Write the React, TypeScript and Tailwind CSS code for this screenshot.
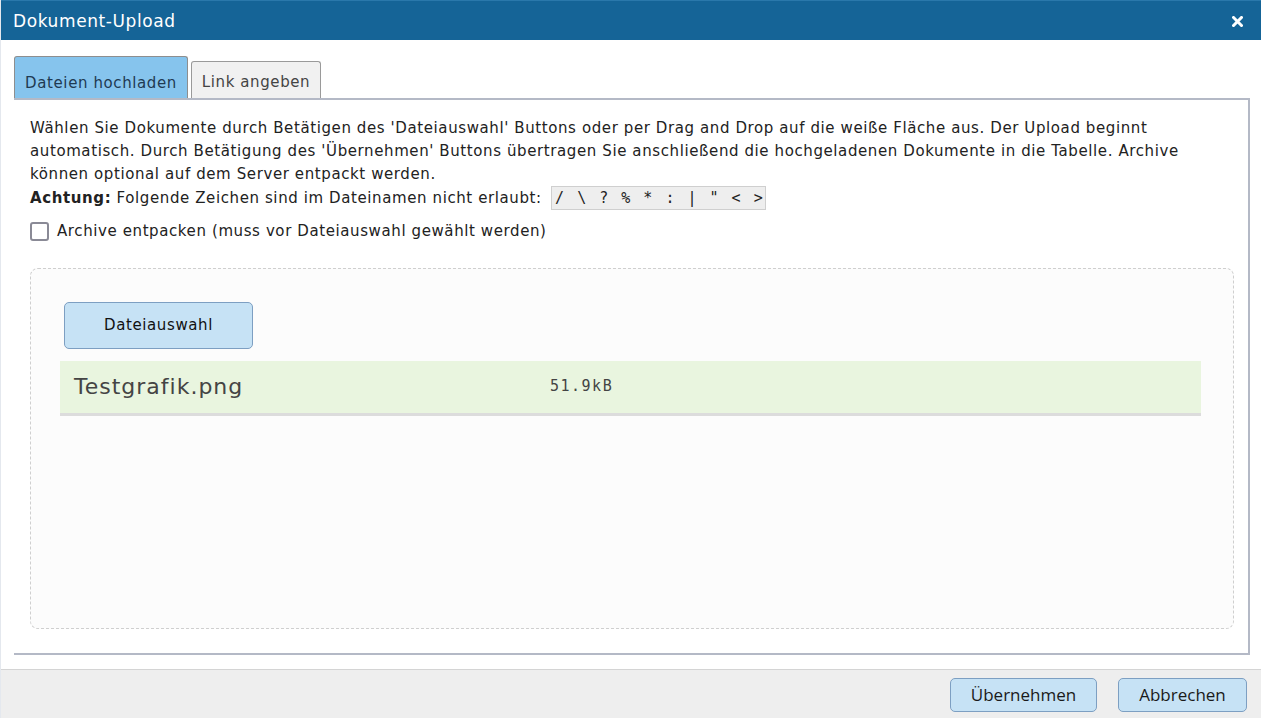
import { useState } from "react";

const verdana = { fontFamily: '"DejaVu Sans", Verdana, sans-serif' };
const mono = { fontFamily: '"DejaVu Sans Mono", monospace' };

function CloseIcon() {
  return (
    <svg width="11" height="11" viewBox="0 0 11 11" className="block">
      <path d="M1.5 1.5 L9.5 9.5 M9.5 1.5 L1.5 9.5" stroke="#fff" strokeWidth="3" strokeLinecap="square" />
    </svg>
  );
}

function ActionButton({ label }: { label: string }) {
  return (
    <button
      className="w-full h-[34px] rounded-[5px] border border-[#7d9fc2] bg-[#c6e2f5] text-[17px] tracking-normal text-[#1a1a1a]"
      style={{ fontFamily: '"Open Sans", "Noto Sans", sans-serif' }}
    >
      {label}
    </button>
  );
}

export default function App() {
  const [unpack, setUnpack] = useState(false);

  return (
    <div
      className="w-[1261px] h-[718px] flex flex-col bg-white border-l border-[#e4e8ee] overflow-hidden tracking-[0.6px]"
      style={verdana}
    >
      {/* title bar */}
      <div className="h-[40px] shrink-0 bg-[#156497] flex items-center justify-between pl-[12px] pr-[18px] pt-[2px] border-t border-[#2a78ab]">
        <span className="text-[17px] text-white">Dokument-Upload</span>
        <CloseIcon />
      </div>

      {/* body */}
      <div className="flex-1 pt-[16px] pl-[13px] pr-[11px] pb-[14px] flex flex-col">
        {/* tabs */}
        <div className="flex items-end gap-[3px] h-[42px]">
          <div className="w-[174px] h-[42px] flex items-center justify-center pt-[11px] rounded-t-[3px] border border-b-0 border-[#8e8e8e] bg-[#86c4ed] text-[15px] text-[#1f3a52]">
            Dateien hochladen
          </div>
          <div className="w-[130px] h-[37px] flex items-center justify-center pt-[5px] rounded-t-[3px] border border-b-0 border-[#9a9a9a] bg-[#f1f1f1] text-[15px] text-[#444]">
            Link angeben
          </div>
        </div>

        {/* panel */}
        <div className="flex-1 border-t-2 border-r-2 border-b-2 border-[#b4b9c6] pl-[16px] pr-[6px] pt-[17px] pb-[24px] flex flex-col">
          <p className="text-[15px] leading-[23px] text-[#222] whitespace-nowrap">
            Wählen Sie Dokumente durch Betätigen des 'Dateiauswahl' Buttons oder per Drag and Drop auf die weiße Fläche aus. Der Upload beginnt
            <br />
            automatisch. Durch Betätigung des 'Übernehmen' Buttons übertragen Sie anschließend die hochgeladenen Dokumente in die Tabelle. Archive
            <br />
            können optional auf dem Server entpackt werden.
            <br />
            <span className="font-bold">Achtung:</span> Folgende Zeichen sind im Dateinamen nicht erlaubt:{" "}
            <code
              className="inline-block align-middle ml-[4px] border border-[#cfcfcf] bg-[#eeeeee] pl-[3px] pr-0 h-[24px] leading-[22px] text-[15px] tracking-[2px] text-[#222]"
              style={mono}
            >
              / \ ? % * : | " &lt; &gt;
            </code>
          </p>

          <label className="mt-[10px] flex items-center gap-[8px] text-[15px] text-[#222] cursor-pointer">
            <span
              onClick={() => setUnpack(!unpack)}
              className="w-[19px] h-[19px] rounded-[3px] border-2 border-[#8a8a96] bg-white flex items-center justify-center text-[12px]"
            >
              {unpack ? "✓" : ""}
            </span>
            Archive entpacken (muss vor Dateiauswahl gewählt werden)
          </label>

          {/* drop zone */}
          <div className="flex-1 mt-[25px] mr-[8px] rounded-[8px] border border-dashed border-[#cfcfcf] bg-[#fcfcfc] pt-[33px] pl-[29px] pr-[32px]">
            <button className="ml-[4px] w-[189px] h-[47px] rounded-[5px] border border-[#7d9fc2] bg-[#c6e2f5] text-[15px] text-[#111]">
              Dateiauswahl
            </button>
            <div className="mt-[12px] h-[55px] bg-[#e9f5df] border-b-[3px] border-[#dcdcdc] flex items-center">
              <span className="w-[490px] pl-[14px] text-[22px] tracking-[1px] text-[#444]">Testgrafik.png</span>
              <span className="text-[15px] tracking-[1.5px] text-[#444]" style={mono}>
                51.9kB
              </span>
            </div>
          </div>
        </div>
      </div>

      {/* footer */}
      <div className="h-[49px] shrink-0 bg-[#eeeeee] border-t border-[#d4d4d4] flex items-center justify-end gap-[21px] pr-[14px] pt-[2px]">
        <div className="w-[147px] flex">
          <ActionButton label="Übernehmen" />
        </div>
        <div className="w-[129px] flex">
          <ActionButton label="Abbrechen" />
        </div>
      </div>
    </div>
  );
}
